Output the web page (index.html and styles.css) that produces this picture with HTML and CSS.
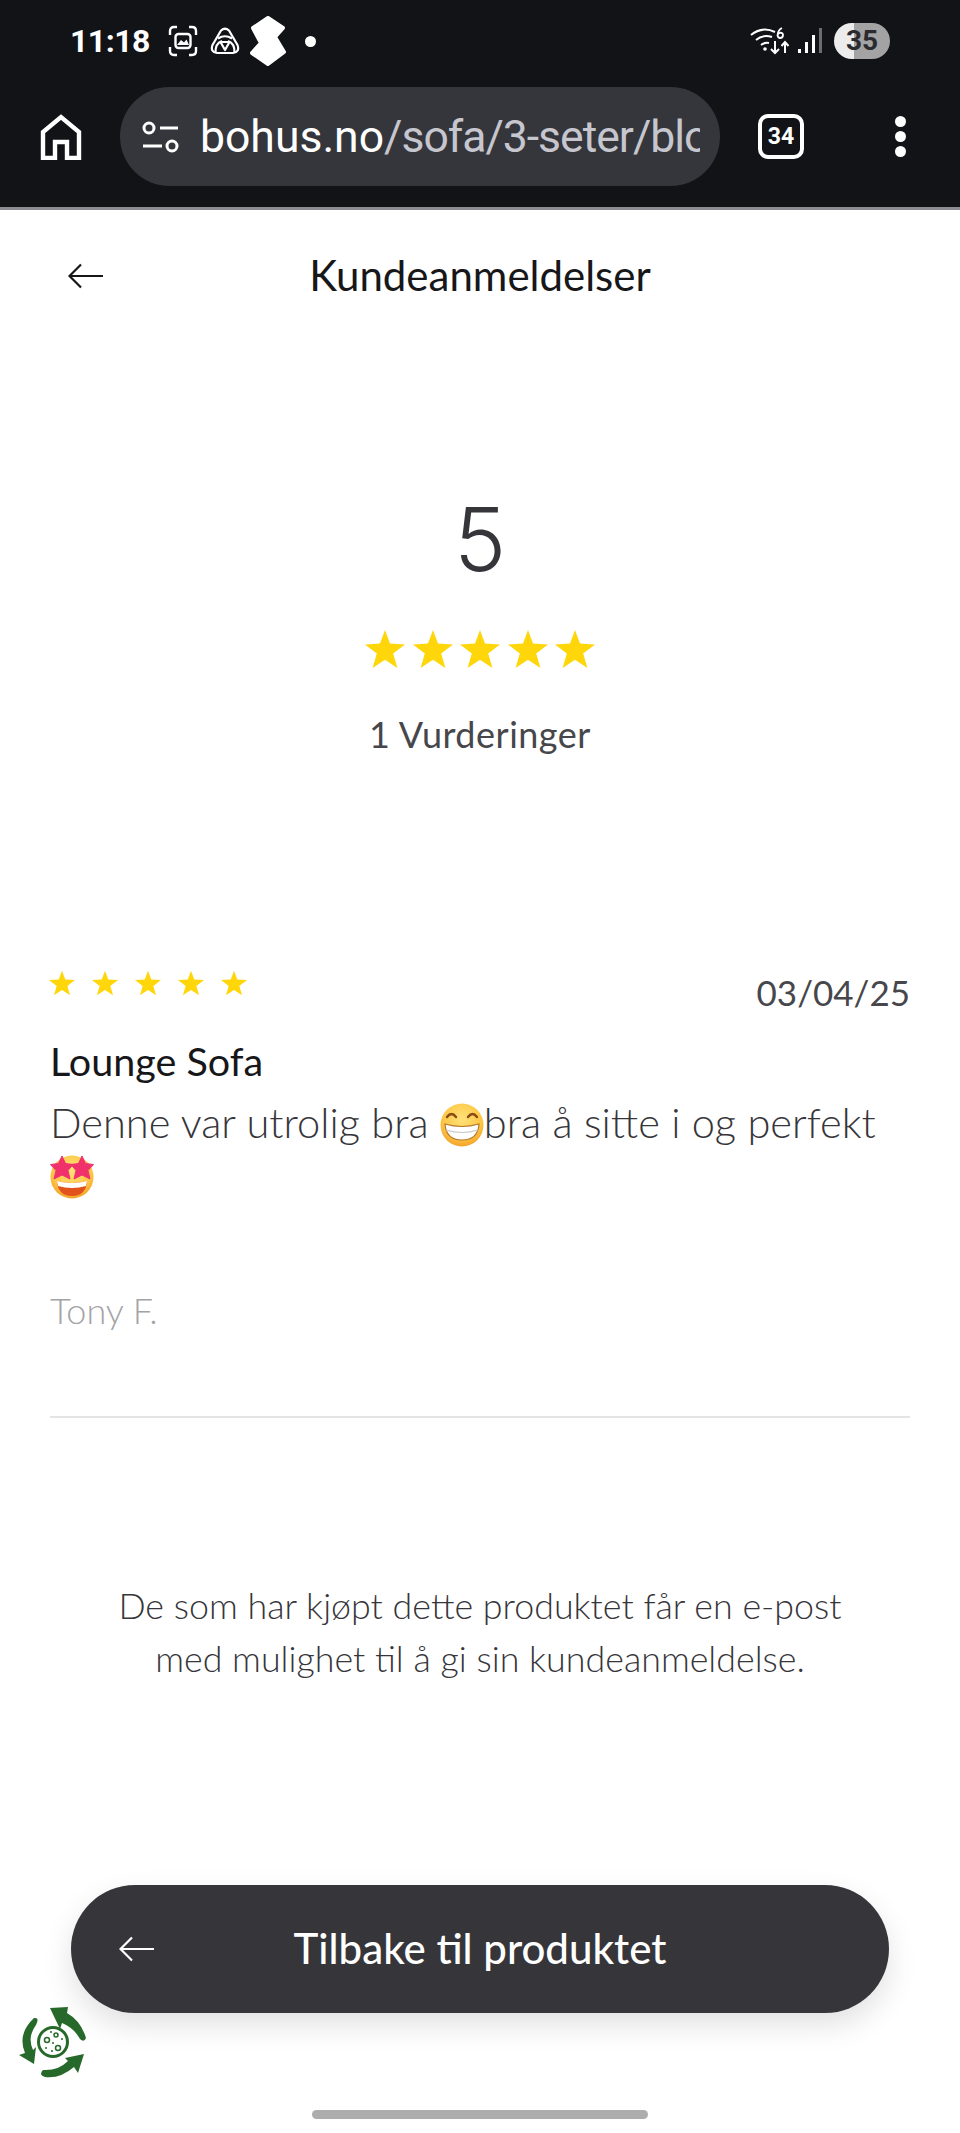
FILE: index.html
```html
<!DOCTYPE html>
<html lang="no">
<head>
  <meta charset="UTF-8">
  <title>Kundeanmeldelser</title>
  <link rel="stylesheet" href="styles.css">
</head>
<body>

  <svg width="0" height="0" class="defs">
    <defs>
      <symbol id="star" viewBox="0 0 40 40">
        <path d="M20 1 L25 14.6 L40 15.4 L28.2 24.6 L32.4 39 L20 30.8 L7.6 39 L11.8 24.6 L0 15.4 L15 14.6 Z" fill="#ffd60a"/>
      </symbol>
      <symbol id="back" viewBox="0 0 36 26">
        <path d="M35 13 H2 M13 1.5 L1.5 13 L13 24.5" fill="none" stroke="currentColor" stroke-width="2.2"/>
      </symbol>
      <radialGradient id="face" cx="50%" cy="35%" r="70%">
        <stop offset="0" stop-color="#ffe27a"/>
        <stop offset="0.65" stop-color="#fdc644"/>
        <stop offset="1" stop-color="#f09a24"/>
      </radialGradient>
    </defs>
  </svg>

  <!-- telefon + nettleser -->
  <div class="chrome">
    <div class="statusbar">
      <span class="time">11:18</span>
      <svg class="ic-shot" viewBox="0 0 32 32" fill="none" stroke="#fff" stroke-width="2.4">
        <path d="M3 10 V6 Q3 2 7 2 H10 M22 2 H25 Q29 2 29 6 V10 M29 22 V26 Q29 30 25 30 H22 M10 30 H7 Q3 30 3 26 V22"/>
        <rect x="8.5" y="9" width="15" height="14" rx="3"/>
        <path d="M10 20 L14 15 L17 17.5 L19.5 14.5 L22 20 Z" fill="#fff" stroke="none"/>
      </svg>
      <svg class="ic-tri" viewBox="0 0 30 28" fill="none" stroke="#fff" stroke-width="2.2" stroke-linejoin="round">
        <path d="M11 3.500 Q15 0 19 3.500 L27.500 18 Q30 25 23 26 H7 Q0 25 2.500 18 Z"/>
        <path d="M8 11.500 Q15 7 22 11.500 M5.500 26 Q5 16.500 12 14 M24.500 26 Q25 16.500 18 14 M10.500 15 H19.500 L15 23 Z"/>
      </svg>
      <svg class="ic-blob" viewBox="0 0 38 50">
        <path d="M19 2 L34 12 L26 21 L35 36 L19 48 L3 37 L12 27 L4 12 Z" fill="#fff" stroke="#fff" stroke-width="4" stroke-linejoin="round"/>
      </svg>
      <span class="dot"></span>
      <span class="status-right">
        <svg class="ic-wifi" viewBox="0 0 40 30" fill="none" stroke="#fff" stroke-width="2">
          <path d="M1 9 Q12 0 25 6 M6 14 Q13 8 22 11 M11 19 Q15 16 19 17"/>
          <circle cx="15" cy="23" r="1.8" fill="#fff" stroke="none"/>
          <path d="M25 15 V27 M21 23 L25 27 L29 23 M35 27 V16 M31.500 20 L35 16 L38.500 20"/>
          <path d="M32 2 Q28 4 27.500 9 Q28 12 30 12 Q33 12 33 9 Q33 6.500 30 6.800 Q28 7 27.500 9" stroke-width="1.800"/>
        </svg>
        <svg class="ic-signal" viewBox="0 0 26 28">
          <rect x="1" y="22" width="3" height="4" fill="#fff"/>
          <rect x="8" y="15" width="3" height="11" fill="#fff"/>
          <rect x="15" y="8" width="3" height="18" fill="#fff"/>
          <rect x="22" y="1" width="3" height="25" fill="#6b6c70"/>
        </svg>
        <span class="battery">35</span>
      </span>
    </div>

    <div class="toolbar">
      <svg class="ic-home" viewBox="0 0 42 46" fill="none" stroke="#fff" stroke-width="4.400">
        <path d="M3 44 V18 L21 3 L39 18 V44 H27 V28 H15 V44 Z"/>
      </svg>
      <div class="urlbar">
        <svg class="ic-tune" viewBox="0 0 40 32" fill="none" stroke="#fff" stroke-width="3">
          <circle cx="8" cy="7" r="5"/>
          <path d="M19 7 H37 M2 25 H21"/>
          <circle cx="31" cy="25" r="5"/>
        </svg>
        <span class="url"><b>bohus.no</b>/sofa/3-seter/blo</span>
      </div>
      <span class="tabs">34</span>
      <span class="menu"><i></i><i></i><i></i></span>
    </div>
  </div>
  <div class="chrome-line"></div>

  <main class="page">
    <header class="topbar">
      <svg class="back"><use href="#back"/></svg>
      <h1>Kundeanmeldelser</h1>
    </header>

    <section class="summary">
      <div class="score">5</div>
      <div class="stars-big">
        <svg><use href="#star"/></svg>
        <svg><use href="#star"/></svg>
        <svg><use href="#star"/></svg>
        <svg><use href="#star"/></svg>
        <svg><use href="#star"/></svg>
      </div>
      <div class="count">1 Vurderinger</div>
    </section>

    <article class="review">
      <div class="review-top">
        <div class="stars-small">
          <svg><use href="#star"/></svg>
          <svg><use href="#star"/></svg>
          <svg><use href="#star"/></svg>
          <svg><use href="#star"/></svg>
          <svg><use href="#star"/></svg>
        </div>
        <span class="date">03/04/25</span>
      </div>
      <h2>Lounge Sofa</h2>
      <p class="review-text">Denne var utrolig bra
        <svg class="emoji" viewBox="0 0 44 44">
          <circle cx="22" cy="22" r="21.500" fill="url(#face)"/>
          <path d="M7 14 Q11.500 8 16 14 M28 14 Q32.500 8 37 14" fill="none" stroke="#8a4a16" stroke-width="2.400" stroke-linecap="round"/>
          <path d="M5 21 Q22 26 39 21 Q38 37 22 37 Q6 37 5 21 Z" fill="#fff" stroke="#b5772a" stroke-width="1.200"/>
          <path d="M6 27 Q22 32 38 27" fill="none" stroke="#c9c9c9" stroke-width="1.200"/>
        </svg><span class="after-emoji">bra å sitte i og perfekt</span>
        <svg class="emoji emoji-2" viewBox="0 0 44 44">
          <circle cx="22" cy="22" r="21.500" fill="url(#face)"/>
          <path d="M12 1 L15.500 8.500 L23 9.500 L18 15.500 L20 24 L12 20 L4 24 L6 15.500 L0.500 9.500 L8.500 8.500 Z" fill="#f0316b" stroke="#f0316b" stroke-linejoin="round"/>
          <path d="M32 1 L35.500 8.500 L43.500 9.500 L38 15.500 L40 24 L32 20 L24 24 L26 15.500 L21 9.500 L28.500 8.500 Z" fill="#f0316b" stroke="#f0316b" stroke-linejoin="round"/>
          <path d="M7 26 Q22 30 37 26 Q36 41 22 41 Q8 41 7 26 Z" fill="#e2521c"/>
          <path d="M7 26 Q22 30 37 26 L36 31 Q22 35 8 31 Z" fill="#fff"/>
        </svg>
      </p>
      <div class="author">Tony F.</div>
    </article>

    <p class="note">De som har kjøpt dette produktet får en e-post<br>med mulighet til å gi sin kundeanmeldelse.</p>
  </main>

  <a class="back-btn" href="#">
    <svg class="back-btn-arrow"><use href="#back"/></svg>
    <span>Tilbake til produktet</span>
  </a>

  <svg class="eco" viewBox="0 0 68 72">
    <g fill="#27692b">
      <path d="M32 1 L50 0 L49 6 Q63 14 68 31 Q66 36 62 32 Q56 21 44 16 L42 22 Z"/>
      <path d="M16 11 Q22 10 18 18 Q9 30 15 43 L18 40 L16 57 L1 48 L7 46 Q-1 27 16 11 Z"/>
      <path d="M66 47 L60 66 L56 60 Q42 72 27 70 Q20 68 25 63 Q40 64 50 54 L47 51 Z"/>
    </g>
    <circle cx="35" cy="35" r="14.500" fill="none" stroke="#27692b" stroke-width="3"/>
    <g fill="none" stroke="#27692b" stroke-width="1.500">
      <circle cx="29" cy="33" r="2.500"/>
      <circle cx="38" cy="28" r="2"/>
      <circle cx="40" cy="41" r="2.500"/>
    </g>
    <g fill="#27692b">
      <circle cx="33" cy="25" r="1"/><circle cx="44" cy="32" r="1"/>
      <circle cx="35" cy="36" r="1"/><circle cx="28" cy="41" r="1"/><circle cx="34" cy="44" r="1"/>
    </g>
  </svg>

  <div class="home-bar"></div>

</body>
</html>
```

FILE: styles.css
```css
html, body {
  margin: 0;
  padding: 0;
}

body {
  position: relative;
  height: 2133px;
  overflow: hidden;
  background: #fff;
  font-family: 'Lato', sans-serif;
  color: #36353a;
}

.defs {
  display: block;
  position: absolute;
}

/* status + nettleser */
.chrome {
  background: #111317;
  height: 207px;
}

.chrome-line {
  height: 3px;
  background: #8c8d94;
}

.statusbar {
  display: flex;
  align-items: center;
  height: 82px;
  padding: 0 70px;
  color: #fff;
}

.time {
  font-family: 'Roboto', sans-serif;
  font-weight: 700;
  font-size: 32px;
  letter-spacing: -0.5px;
  width: 97px;
}

.ic-shot { width: 32px; height: 32px; }
.ic-tri { width: 30px; height: 28px; margin-left: 11px; }
.ic-blob { width: 38px; height: 50px; margin-left: 9px; }

.dot {
  width: 11px;
  height: 11px;
  border-radius: 50%;
  background: #fff;
  margin-left: 18px;
}

.status-right {
  margin-left: auto;
  display: flex;
  align-items: center;
}

.ic-wifi { width: 40px; height: 30px; }
.ic-signal { width: 26px; height: 28px; margin-left: 7px; }

.battery {
  width: 56px;
  height: 36px;
  margin-left: 11px;
  border-radius: 18px;
  background: linear-gradient(to right, #ececec 0 35%, #a3a3a3 35% 100%);
  color: #2b2b2f;
  font-family: 'Roboto', sans-serif;
  font-weight: 700;
  font-size: 28px;
  line-height: 36px;
  text-align: center;
}

.toolbar {
  display: flex;
  align-items: center;
  height: 99px;
  margin-top: 5px;
  padding-left: 40px;
}

.ic-home { width: 42px; height: 46px; }

.urlbar {
  display: flex;
  align-items: center;
  width: 600px;
  height: 99px;
  margin-left: 38px;
  border-radius: 50px;
  background: #35363b;
  padding-left: 21px;
  box-sizing: border-box;
}

.ic-tune { width: 40px; height: 32px; }

.url {
  width: 500px;
  margin-left: 19px;
  overflow: hidden;
  white-space: nowrap;
  font-family: 'Roboto', sans-serif;
  font-size: 44.5px;
  letter-spacing: -1px;
  color: #c6c6ce;
}

.url b {
  font-weight: 400;
  letter-spacing: 0;
  color: #fff;
}

.tabs {
  width: 38px;
  height: 37px;
  margin-left: 38px;
  border: 4px solid #fff;
  border-radius: 10px;
  color: #fff;
  font-family: 'Roboto', sans-serif;
  font-weight: 700;
  font-size: 23px;
  line-height: 37px;
  text-align: center;
}

.menu {
  display: flex;
  flex-direction: column;
  gap: 4px;
  margin-left: 91px;
}

.menu i {
  display: block;
  width: 11px;
  height: 11px;
  border-radius: 50%;
  background: #fff;
}

/* innhold */
.page {
  padding: 0 51px;
}

.topbar {
  position: relative;
  height: 132px;
  box-sizing: border-box;
  padding-bottom: 3px;
  display: flex;
  align-items: center;
  justify-content: center;
}

.topbar h1 {
  margin: 0;
  font-size: 42px;
  font-weight: 400;
  color: #17171a;
}

.back {
  position: absolute;
  left: 17px;
  top: 53px;
  width: 36px;
  height: 26px;
  color: #17171a;
}

.summary {
  display: flex;
  flex-direction: column;
  align-items: center;
  padding-top: 142px;
}

.score {
  font-family: 'Inter', sans-serif;
  font-size: 88px;
  font-weight: 300;
  line-height: 110px;
}

.stars-big {
  display: flex;
  gap: 7.500px;
  margin-top: 35px;
}

.stars-big svg {
  width: 40px;
  height: 40px;
}

.count {
  margin-top: 42px;
  font-size: 36px;
  letter-spacing: 0.5px;
  line-height: 46px;
  color: #47474b;
}

.review {
  margin-top: 213px;
  height: 448px;
  border-bottom: 2px solid #e4e4e6;
  box-sizing: border-box;
  margin-left: -1px;
  margin-right: -1px;
}

.review-top {
  display: flex;
  justify-content: space-between;
}

.stars-small {
  display: flex;
  gap: 17px;
  margin-left: -1px;
}

.stars-small svg {
  width: 26px;
  height: 26px;
}

.date {
  font-size: 35px;
  line-height: 44px;
  color: #47474b;
}

h2 {
  margin: 24px 0 0;
  font-size: 39.500px;
  font-weight: 400;
  line-height: 46px;
  color: #17171a;
}

.review-text {
  margin: 10px 0 0;
  font-size: 41.600px;
  font-weight: 300;
  line-height: 56px;
}

.emoji {
  width: 44px;
  height: 44px;
  vertical-align: -9px;
}

.emoji-2 {
  display: block;
  margin-top: 5px;
}

.author {
  margin-top: 88px;
  font-size: 36px;
  font-weight: 300;
  line-height: 46px;
  color: #a3a3a6;
}

.note {
  margin: 161px 0 0;
  font-size: 35.800px;
  font-weight: 300;
  line-height: 53px;
  text-align: center;
}

/* ligger over innholdet */
.back-btn {
  position: absolute;
  left: 71px;
  top: 1885px;
  width: 818px;
  height: 128px;
  box-sizing: border-box;
  padding-bottom: 3px;
  border-radius: 64px;
  background: #36353a;
  box-shadow: 0 12px 30px rgba(0, 0, 0, 0.12);
  color: #fff;
  display: flex;
  align-items: center;
  justify-content: center;
  text-decoration: none;
  font-size: 42px;
  font-weight: 500;
}

.back-btn-arrow {
  position: absolute;
  left: 48px;
  top: 51px;
  width: 36px;
  height: 26px;
  color: #fff;
}

.eco {
  position: absolute;
  left: 18px;
  top: 2007px;
  width: 68px;
  height: 72px;
}

.home-bar {
  position: absolute;
  left: 312px;
  top: 2110px;
  width: 336px;
  height: 9px;
  border-radius: 5px;
  background: #adadad;
}
```
